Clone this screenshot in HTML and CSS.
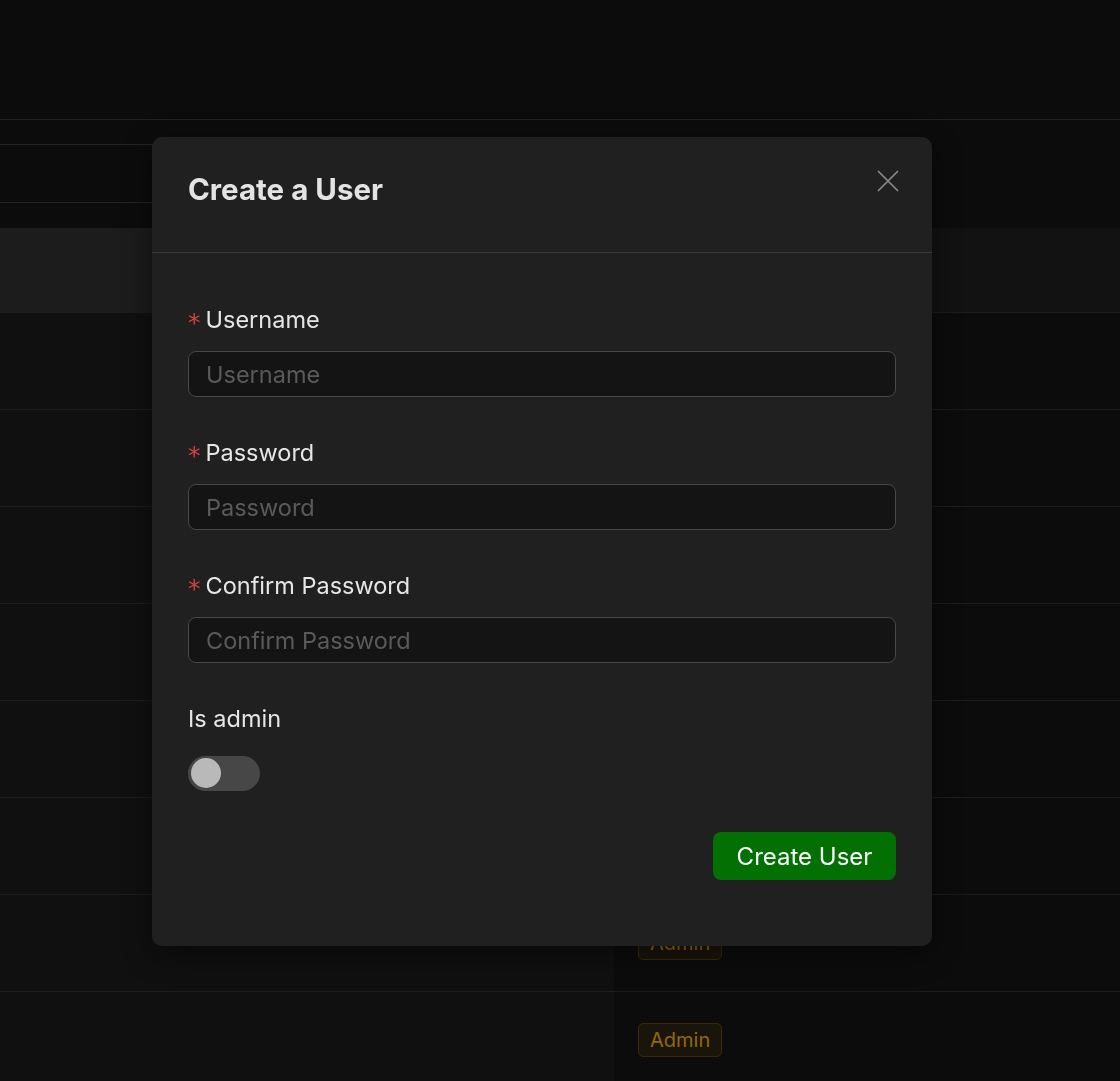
FILE: index.html
```html
<!DOCTYPE html>
<html lang="en">
<head>
<meta charset="utf-8">
<title>Create a User</title>
<link rel="stylesheet" href="styles.css">
</head>
<body>
<div class="page">
  <div class="topbar"></div>
  <div class="toolbar">
    <div class="search"></div>
  </div>
  <div class="table">
    <div class="row head"><div class="cell name"></div><div class="cell role"></div></div>
    <div class="row"><div class="cell name"></div><div class="cell role"><span class="badge">Admin</span></div></div>
    <div class="row"><div class="cell name"></div><div class="cell role"><span class="badge">Admin</span></div></div>
    <div class="row"><div class="cell name"></div><div class="cell role"><span class="badge">Admin</span></div></div>
    <div class="row"><div class="cell name"></div><div class="cell role"><span class="badge">Admin</span></div></div>
    <div class="row"><div class="cell name"></div><div class="cell role"><span class="badge">Admin</span></div></div>
    <div class="row"><div class="cell name"></div><div class="cell role"><span class="badge">Admin</span></div></div>
    <div class="row"><div class="cell name"></div><div class="cell role"><span class="badge">Admin</span></div></div>
    <div class="row"><div class="cell name"></div><div class="cell role"><span class="badge">Admin</span></div></div>
  </div>
</div>

<div class="modal">
  <div class="modal-header">
    <h2 class="modal-title">Create a User</h2>
    <button class="close" aria-label="Close">
      <svg width="22" height="22" viewBox="0 0 22 22"><path d="M1 1 L21 21 M21 1 L1 21" stroke="#8a8a8a" stroke-width="1.7" fill="none"/></svg>
    </button>
  </div>
  <div class="modal-body">
    <div class="item">
      <label class="label"><span class="req">*</span>Username</label>
      <input class="input" placeholder="Username">
    </div>
    <div class="item">
      <label class="label"><span class="req">*</span>Password</label>
      <input class="input" type="password" placeholder="Password">
    </div>
    <div class="item">
      <label class="label"><span class="req">*</span>Confirm Password</label>
      <input class="input" type="password" placeholder="Confirm Password">
    </div>
    <div class="item last">
      <label class="label">Is admin</label>
      <div class="switch-wrap"><span class="switch"><span class="knob"></span></span></div>
    </div>
    <div class="footer">
      <button class="primary">Create User</button>
    </div>
  </div>
</div>
</body>
</html>
```
FILE: styles.css
```css
* { box-sizing: border-box; }
html, body { margin: 0; padding: 0; background: #0c0c0c; }
body { font-family: Inter, "Noto Sans", sans-serif; color: #e6e6e6; overflow: hidden; }

.page { width: 1120px; height: 1081px; background: #0c0c0c; overflow: hidden; }
.topbar { height: 120px; border-bottom: 1px solid #222; }
.toolbar { height: 108px; padding-top: 24px; }
.search { width: 560px; height: 59px; border-top: 1px solid #262626; border-bottom: 1px solid #262626; }

.table { display: flex; flex-direction: column; }
.row { display: flex; height: 97px; border-bottom: 1px solid #1d1d1d; }
.row.head { height: 85px; }
.cell { height: 100%; }
.cell.name { width: 614px; background: #101010; }
.cell.role { flex: 1; background: #0c0c0c; display: flex; align-items: center; padding-left: 24px; }
.row.head .cell.name { background: #1c1c1c; }
.row.head .cell.role { background: #121212; }

.badge { display: inline-block; height: 34px; line-height: 32px; padding: 0 11px; font-size: 20px; color: #94660f; background: #1a150b; border: 1px solid #36290f; border-radius: 5px; }

.modal { position: fixed; left: 152px; top: 137px; width: 780px; height: 809px; background: #202020; border-radius: 10px; box-shadow: 0 8px 30px rgba(0,0,0,0.45); }
.modal-header { display: flex; justify-content: space-between; align-items: flex-start; padding: 32px 33px 43px 36px; border-bottom: 1px solid #3a3a3a; }
.modal-title { margin: 0; font-size: 29.5px; line-height: 40px; font-weight: 700; color: #e3e3e3; letter-spacing: 0; }
.close { background: none; border: 0; padding: 0; margin-top: 1px; width: 22px; height: 22px; cursor: pointer; }
.close svg { display: block; }

.modal-body { padding: 50px 36px 0 36px; }
.item { margin-bottom: 39px; }
.item.last { margin-bottom: 36px; }
.label { display: flex; align-items: center; height: 33px; font-size: 23.5px; color: #e6e6e6; margin-bottom: 15px; }
.req { color: #d4403d; font-size: 25px; margin-right: 5px; font-family: "DejaVu Sans", sans-serif; position: relative; top: 3px; }
.input { display: block; width: 100%; height: 46px; background: #141414; border: 1px solid #474747; border-radius: 8px; padding: 0 17px; font-family: inherit; font-size: 23.5px; color: #e6e6e6; outline: none; }
.input::placeholder { color: #5a5a5a; }

.switch-wrap { height: 46px; display: flex; align-items: center; }
.switch { width: 72px; height: 35px; border-radius: 18px; background: #474747; display: flex; align-items: center; padding-left: 3px; }
.knob { width: 30px; height: 30px; border-radius: 50%; background: #b9b9b9; }

.footer { display: flex; justify-content: flex-end; }
.primary { height: 48px; width: 183px; background: #037003; color: #fff; border: 0; border-radius: 8px; font-family: inherit; font-size: 24px; }
```
